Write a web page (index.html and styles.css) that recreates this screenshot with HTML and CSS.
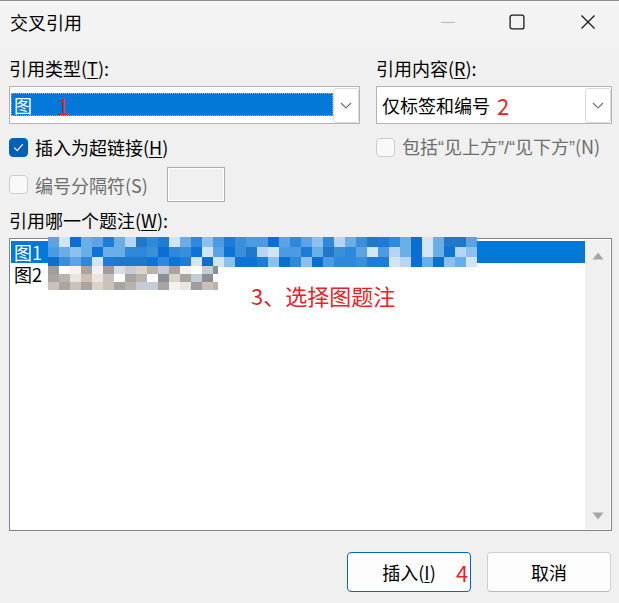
FILE: index.html
```html
<html>
<head>
    <title>交叉引用</title>
    <link rel="stylesheet" href="styles.css">
</head>
<body>
    <div class="window">
        <div class="titlebar">
            <span class="title">交叉引用</span>
            <div class="caption">
                <span class="cap-btn cap-min"><svg width="16" height="16" viewBox="0 0 16 16"><path d="M1 8.5h14" stroke="#bdbdbd" stroke-width="1.2"/></svg></span>
                <span class="cap-btn cap-max"><svg width="16" height="16" viewBox="0 0 16 16"><rect x="1.1" y="1.1" width="13.8" height="13.8" rx="2" fill="none" stroke="#1b1b1b" stroke-width="1.3"/></svg></span>
                <span class="cap-btn cap-close"><svg width="16" height="16" viewBox="0 0 16 16"><path d="M1.5 1.5l13 13M14.5 1.5l-13 13" stroke="#1b1b1b" stroke-width="1.3"/></svg></span>
            </div>
        </div>

        <div class="main">
            <div class="top-row">
                <div class="col-left">
                    <div class="label">引用类型(<u>T</u>):</div>
                    <div class="combo">
                        <div class="combo-value selected">
                            <span>图</span>
                            <span class="mark mark-1">1</span>
                        </div>
                        <div class="combo-btn">
                            <svg width="12" height="7" viewBox="0 0 12 7"><path d="M1 1l5 5 5-5" fill="none" stroke="#707070" stroke-width="1.1"/></svg>
                        </div>
                    </div>
                    <div class="check-row">
                        <span class="cb checked">
                            <svg width="11" height="9" viewBox="0 0 11 9"><path d="M1.2 4.6l3 3 5.6-6.4" fill="none" stroke="#fff" stroke-width="1.2"/></svg>
                        </span>
                        <span>插入为超链接(<u>H</u>)</span>
                    </div>
                    <div class="check-row sep-row">
                        <span class="cb"></span>
                        <span class="dis sep-label">编号分隔符(S)</span>
                        <span class="sep-box"></span>
                    </div>
                </div>

                <div class="col-right">
                    <div class="label">引用内容(<u>R</u>):</div>
                    <div class="combo">
                        <div class="combo-value plain">
                            <span>仅标签和编号</span>
                            <span class="mark mark-2">2</span>
                        </div>
                        <div class="combo-btn">
                            <svg width="12" height="7" viewBox="0 0 12 7"><path d="M1 1l5 5 5-5" fill="none" stroke="#707070" stroke-width="1.1"/></svg>
                        </div>
                    </div>
                    <div class="check-row">
                        <span class="cb"></span>
                        <span class="dis">包括<span class="q">“</span>见上方<span class="q">”/“</span>见下方<span class="q">”</span>(N)</span>
                    </div>
                </div>
            </div>

            <div class="label label-list">引用哪一个题注(<u>W</u>):</div>
            <div class="listbox">
                <div class="items">
                    <div class="item selected">
                        <span class="item-text">图1</span>
                        <svg class="blur blur-1" id="blur1" width="430" height="30"></svg>
                    </div>
                    <div class="item">
                        <span class="item-text">图2</span>
                        <svg class="blur blur-2" id="blur2" width="170" height="25"></svg>
                    </div>
                    <div class="mark mark-3">3、选择图题注</div>
                </div>
                <div class="scrollbar">
                    <svg width="12" height="8" viewBox="0 0 12 8"><path d="M6 0.5L11.5 7.5H0.5z" fill="#a6a6a6"/></svg>
                    <svg width="12" height="8" viewBox="0 0 12 8"><path d="M6 7.5L11.5 0.5H0.5z" fill="#a6a6a6"/></svg>
                </div>
            </div>

            <div class="buttons">
                <button class="btn btn-focus">插入(<u>I</u>)<span class="mark mark-4">4</span></button>
                <button class="btn">取消</button>
            </div>
        </div>
    </div>

    <script>
        // pixelated captions (blurred out in the original)
        function mosaic(id, cols, rows, cw, ch, palette, seed)
        {
            var s = seed;
            var html = "";
            for (var r = 0; r < rows; r++)
            {
                for (var c = 0; c < cols; c++)
                {
                    s = (s * 9301 + 49297) % 233280;
                    var col = palette[Math.floor(s / 233280 * palette.length)];
                    html += '<rect x="' + (c * cw) + '" y="' + (r * ch) + '" width="' + cw + '" height="' + ch + '" fill="' + col + '"/>';
                }
            }
            document.getElementById(id).innerHTML = html;
        }

        mosaic("blur1", 39, 3, 11, 10,
            ["#0a6fd0", "#1c7cd6", "#2e88dc", "#4a9be2", "#6aaee8", "#8cc0ee", "#b5d5f2", "#1f78c8", "#3a8fd9", "#0b74d6", "#5aa3e4", "#d3e5f5"], 17);
        mosaic("blur2", 16, 3, 11, 8,
            ["#d6dde6", "#c4ccd6", "#e8e4df", "#cdbfb4", "#9e9e9e", "#b8b3ad", "#f5f2ee", "#8a8f96", "#c9c2bb", "#aaa4a0", "#ffffff", "#d9d3cc"], 5);
    </script>
</body>
</html>
```

FILE: styles.css
```css
* {
    box-sizing: border-box;
}

body
{
    margin: 0;
    background-color: #f0f0f0;
    font-family: "Noto Sans CJK SC", "Noto Sans", sans-serif;
    font-size: 18px;
    color: #000000;
}

u
{
    text-underline-offset: 2px;
    text-decoration-thickness: 1px;
}

.window
{
    width: 619px;
    height: 603px;
    overflow: hidden;
    border-top: 1px solid #8e8e8e;
}

.titlebar
{
    height: 47px;
    background-color: #f3f3f3;
    display: flex;
    align-items: center;
    padding-left: 10px;
    padding-bottom: 5px;
}

.title
{
    line-height: 22px;
}

.caption
{
    margin-left: auto;
    display: flex;
    align-items: center;
    padding-right: 23px;
}

.cap-btn
{
    width: 16px;
    height: 16px;
    display: flex;
}

.cap-max
{
    margin-left: 53px;
}

.cap-close
{
    margin-left: 55px;
}

.main
{
    padding: 9px 7px 0 9px;
}

.top-row
{
    display: flex;
    gap: 16px;
}

.col-left
{
    width: 351px;
}

.col-right
{
    flex: 1;
}

.label
{
    height: 22px;
    line-height: 22px;
    margin-bottom: 7px;
}

.combo
{
    height: 38px;
    border: 1px solid #b4b4b4;
    background-color: #ffffff;
    display: flex;
    align-items: flex-start;
    padding: 1px 0 0 1px;
}

.combo-value
{
    flex: 1;
    height: 23px;
    margin-top: 5px;
    display: flex;
    align-items: center;
    line-height: 22px;
}

.combo-value.selected
{
    background-color: #0078d7;
    color: #ffffff;
    border: 1px dotted #f0a040;
    padding-left: 2px;
}

.combo-value.plain
{
    padding-left: 4px;
}

.combo-btn
{
    width: 26px;
    height: 35px;
    border: 1px solid #dadada;
    border-radius: 3px;
    background-color: #ffffff;
    display: flex;
    align-items: center;
    justify-content: center;
}

.mark
{
    color: #e5232b;
    font-size: 22px;
}

.mark-1
{
    margin-left: 25px;
}

.mark-2
{
    margin-left: 7px;
}

.check-row
{
    height: 22px;
    margin-top: 12px;
    display: flex;
    align-items: center;
    gap: 7px;
    line-height: 22px;
    white-space: nowrap;
}

.check-row.sep-row
{
    height: 35px;
    margin-top: 9px;
}

.q
{
    font-family: "Liberation Sans", sans-serif;
}

.cb
{
    width: 19px;
    height: 19px;
    border: 1px solid #cccccc;
    border-radius: 4px;
    background-color: #f9f9f9;
    display: flex;
    align-items: center;
    justify-content: center;
    flex-shrink: 0;
}

.cb.checked
{
    background-color: #005fb8;
    border-color: #005fb8;
}

.dis
{
    color: #6d6d6d;
}

.sep-label
{
    width: 125px;
}

.sep-box
{
    width: 58px;
    height: 35px;
    border: 1px solid #adadad;
    box-shadow: inset 0 0 0 1px #ffffff;
    background-color: #f0f0f0;
}

.label-list
{
    margin-top: 7px;
}

.listbox
{
    width: 603px;
    height: 293px;
    border: 1px solid #7f8287;
    background-color: #ffffff;
    padding: 1px;
    display: flex;
}

.items
{
    flex: 1;
    padding-top: 1px;
    position: relative;
}

.item
{
    height: 22px;
    padding-left: 3px;
    position: relative;
}

.item-text
{
    display: inline-block;
    height: 22px;
    line-height: 22px;
    vertical-align: top;
}

.item.selected
{
    background-color: #0078d7;
    color: #ffffff;
}

.blur
{
    position: absolute;
    left: 37px;
}

.blur-1
{
    top: -4px;
}

.blur-2
{
    top: 3px;
}

.mark-3
{
    position: absolute;
    left: 240px;
    top: 42px;
    font-size: 22px;
    line-height: 26px;
}

.scrollbar
{
    width: 25px;
    background-color: #f0f0f0;
    display: flex;
    flex-direction: column;
    align-items: center;
    justify-content: space-between;
    padding: 12px 0 9px 0;
}

.buttons
{
    display: flex;
    justify-content: flex-end;
    gap: 16px;
    margin-top: 21px;
    padding-right: 1px;
}

.btn
{
    width: 124px;
    height: 40px;
    border: 1px solid #d0d0d0;
    border-bottom-color: #b8b8b8;
    border-radius: 4px;
    background-color: #fdfdfd;
    font-family: "Noto Sans CJK SC", "Noto Sans", sans-serif;
    font-size: 18px;
    color: #000000;
    position: relative;
    padding: 0;
}

.btn-focus
{
    border: 1px solid #0067c0;
}

.mark-4
{
    position: absolute;
    left: 108px;
    top: 6px;
    line-height: 26px;
}
```
